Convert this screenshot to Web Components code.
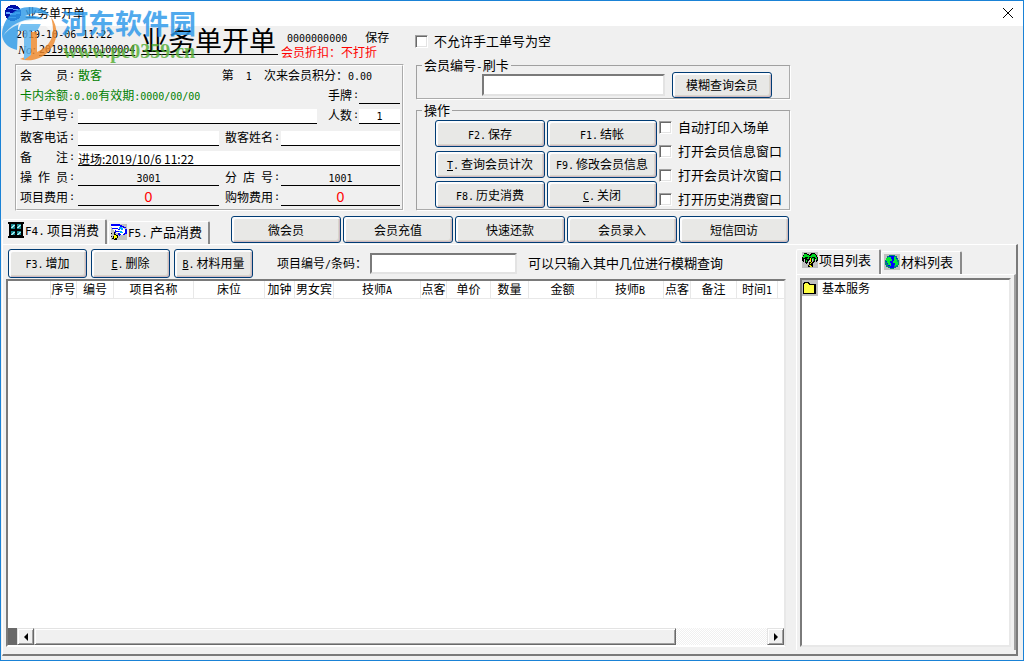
<!DOCTYPE html>
<html lang="zh-CN">
<head>
<meta charset="utf-8">
<title>业务单开单</title>
<style>
html,body{margin:0;height:100%}
body{font:12px/16px "Noto Sans CJK SC",sans-serif;color:#000;background:#f0f0f0}
</style>
</head>
<body>
<order-window></order-window>
<script>
// Half-width runs are set in a 6px monospace beside the 12px full-width glyphs.
const t = s => s.replace(/[ -~]+/g, m => `<span class="a">${m}</span>`);
const base = `
*{box-sizing:border-box}
:host{box-sizing:border-box}
.a,.an{font-family:"DejaVu Sans Mono",monospace;font-size:10px;line-height:1px;white-space:pre}
.big .a{font-size:11px}
button,input{font:inherit;color:inherit;margin:0}
`;
function define(name, css, html) {
  customElements.define(name, class extends HTMLElement {
    constructor() {
      super();
      const tpl = document.createElement('template');
      tpl.innerHTML = `<style>${base}${css}</style>` + (typeof html === 'function' ? html(this) : html);
      this.attachShadow({mode: 'open'}).append(tpl.content.cloneNode(true));
    }
  });
}

define('push-button', `
:host{display:block;height:27px}
button{display:block;width:100%;height:100%;padding:0;border:1px solid #003c74;border-radius:3px;
 background:#e8e8e6;box-shadow:inset 2px 2px #fcfcfd,inset -1px -1px #cdb9c3,inset -2px -2px #d9d5cb;
 line-height:24px;white-space:nowrap;cursor:default}
`, `<button type="button"><slot></slot></button>`);

define('check-box', `
:host{display:block;font-size:13px}
label{display:flex;align-items:center;gap:6px;height:20px;white-space:nowrap}
input{appearance:none;width:13px;height:13px;background:#fff;border:1px solid;border-color:#a0a0a0 #fff #fff #a0a0a0;
 box-shadow:inset 1px 1px #696969,inset -1px -1px #e3e3e3}
`, `<label><input type="checkbox"><slot></slot></label>`);

define('group-box', `
:host{display:block}
fieldset{margin:0;padding:0;height:100%;min-width:0;border:1px solid #a0a0a0;border-right:2px groove #fff;border-bottom:2px groove #fff}
legend{margin-left:5px;padding:0 2px;font-size:13px;line-height:14px}
`, `<fieldset><legend><slot name="title"></slot></legend><slot></slot></fieldset>`);

define('tab-label', `
:host{display:block;height:23px;font-size:13px}
:host([current]){height:25px}
button{display:flex;align-items:center;gap:1px;width:100%;height:100%;padding:0 0 2px 3px;background:#f0f0f0;
 border:0;border-top:1px solid #fff;border-right:2px solid #8a8a8a;box-shadow:inset 1px 0 #fff;
 border-radius:2px 2px 0 0;line-height:18px;white-space:nowrap}
:host([current]) button{padding-left:6px;padding-bottom:4px}
`, `<button type="button"><slot name="icon"></slot><span><slot></slot></span></button>`);

define('pixel-icon', `
:host{display:block;width:16px;height:16px}
svg{display:block}
`, el => `<svg width="16" height="16" viewBox="0 0 16 16" shape-rendering="crispEdges" aria-hidden="true">${({
 window: `<path fill="#000" d="M0 0h16v2h-1v12h1v2H0v-2h1V2H0z"/><path fill="#18878f" d="M3 2h4v5H3zM9 2h4v5H9zM3 9h4v4H3zM9 9h4v4H9z"/><path fill="#9fe8ee" d="M3 5h1V4h1V3h2v1H6v1H5v1H3zM9 5h1V4h1V3h2v1h-1v1h-1v1H9zM3 12h1v-1h1v-1h2v1H6v1H5v1H3zM9 12h1v-1h1v-1h2v1h-1v1h-1v1H9z"/>`,
 hand: `<path fill="#c0c0c0" d="M0 0h16v16H0z"/><path fill="#fff" d="M0 2h9l6 4v4l-6 1-6-4z"/><path fill="#00f" d="M0 0h9v1h2v1h2v1h2v1h-3V3H9V2H0zM1 4h6v1h2v1H5v1h3v1H5v1H4V6h3V5H1zM14 5h2v5h-2v1h-2v-1h1V9h1zM7 9h2v1h1v1H9v1H8v-1H7z"/><path fill="#0af" d="M8 3h3v1h1v2h-2V5H8zM8 7h3v1h1v1H9V8H8z"/><path fill="#000" d="M3 8h1v2h1v1h2v3H6v2H3v-1H2v-3h1zM0 12h1v1H0zM1 14h1v1H1zM0 9h1v1H0z"/><path fill="#ff0" d="M3 11h2v1h1v2H4v1H3z"/>`,
 palm: `<path fill="#c0c0c0" d="M0 0h16v16H0z"/><path fill="#000" d="M2 1h3v1h2v1h1V2h1V1h4v1h1v1h1v2h1v4h-1v1h-1V7h-1v3h-1v1h-1V7h-1v3h1v5H6v-2h1v-3h1V8H7v1H6v2H5v1H4v-1H3V7H2v3H1V9H0V5h1V3h1z"/><path fill="#00d820" d="M2 2h3v1h2v1h2V3h1V2h3v1h1v2h1v3h-1V6h-1V5h-3v1h2v3h-1V7h-1V6H9V5H7v2H5v3H4V8h1V6h1V5H3v1H1V4h1z"/><path fill="#ee0" d="M8 6h1v3H8zM8 9h1v1H8zM9 10h1v1H9zM8 11h1v1H8zM7 13h2v1H7zM8 14h2v1H8z"/>`,
 globe: `<path fill="#c0c0c0" d="M0 0h16v16H0z"/><path fill="#008080" d="M5 1h6v1h2v2h1v2h1v5h-1v2h-2v1h-2v1H6v-1H4v-1H2v-2H1V6h1V4h1V2h2z"/><path fill="#00f" d="M5 2h5v2h3v2h-1v1h-2v2h2v2h-2v3H6v-2H4v-2H3V8H2V6h2V5h2V4H5z"/><path fill="#0e3" d="M2 4h2V3h3v2h1v2H6v2h1v3H6v-1H4V9H3V7H2zM10 3h2v2h1v3h1v3h-2v1h-1V9H9V7h1z"/>`,
 folder: `<path fill="#c0c0c0" d="M0 0h16v16H0z"/><path fill="#000" d="M2 2h5v1h1v1h6v10H1V3h1z"/><path fill="#ff4" d="M3 3h3v1h1v1h5v8H2V4h1z"/>`,
 app: `<path fill="#0010a8" d="M5 0h6v1h2v1h1v1h1v2h1v6h-1v2h-1v1h-2v1h-2v1H5v-1H3v-1H2v-1H1v-2H0V5h1V3h1V2h1V1h2z"/><path fill="#68a8ff" d="M3 3h5v1h5v1H8V4H3zM1 7h4v1h5V7h5v2h-4v1H5V9H1zM4 12h7v1H4z"/>`
})[el.getAttribute('kind')]}</svg>`);

define('site-watermark', `
:host{position:absolute;left:0;top:4px;width:200px;height:60px;pointer-events:none;opacity:.82}
svg{position:absolute;left:0;top:0}
b{position:absolute;left:60px;top:2px;font-size:27px;line-height:32px;color:#2b98ea;white-space:nowrap}
i{position:absolute;left:62px;top:36px;font:bold 20px/20px "Liberation Serif",serif;color:#55ad35;white-space:nowrap}
`, `<svg width="58" height="58" viewBox="0 0 58 58" aria-hidden="true">
<path fill="#2f9be8" d="M1 29C2 14 13 2 29 2c9 0 16 3 20 9-8-4-17-4-25 0 7-1 14 0 19 3L23 16c-5 1-6 4-6 8l-1 21C7 43 1 37 1 29z"/>
<path fill="#f08a2c" d="M50 12c8 10 7 25-2 34-8 9-20 11-29 8l10-4V27h7v20c10-4 16-12 16-22 0-5-1-9-2-13z"/>
<path fill="#5bb5f0" d="M20 19h20l-4 7h-6v24l-7 5V26h-6z"/>
<path fill="#fff" opacity=".7" d="M2 31c7-11 18-17 32-17l14 2c4 3 4 7 1 10-3-5-7-7-13-7H21C13 20 7 25 2 31z"/>
</svg><b>河东软件园</b><i>www.pc0359.cn</i>`);

define('title-bar', `
:host{display:flex;align-items:center;height:25px;padding:0 9px 1px 4px;background:#fff;flex:none}
span{margin-left:4px;flex:1}
button{width:12px;height:24px;padding:0;border:0;background:none}
svg{display:block}
`, `<pixel-icon kind="app"></pixel-icon><span>业务单开单</span>
<button type="button" aria-label="关闭"><svg width="12" height="12" viewBox="0 0 12 12"><path d="M1 1l10 10M11 1L1 11" stroke="#000" fill="none"/></svg></button>`);

define('bill-heading', `
:host{display:flex;height:38px;padding-left:16px;white-space:nowrap}
.no{width:125px;padding-top:1px}
.no div{display:flex;align-items:center;height:15px}
.no .a,.an{line-height:15px}
.no u{text-underline-offset:2px}
em{font-family:"Liberation Serif",serif;font-size:12px;margin:0 3px 0 2px}
h1{margin:1px 0 0;width:137px;height:28px;border-bottom:1px solid #000;font-size:27px;line-height:26px;font-weight:400}
.r{margin-left:3px;padding-top:3px}
.r div{line-height:15px}
.r div:first-child{padding-left:6px}
.r div:first-child span+span{margin-left:18px}
.red{color:#f00}
`, `<div class="no"><div>${t('2019-10-06 11:22')}</div><div><em>No:</em><u class="an">2019100610100004</u></div></div>
<h1>业务单开单</h1>
<div class="r"><div>${t('0000000000')}<span>保存</span></div><div class="red">会员折扣：不打折</div></div>`);

const L = (s, id, cls = '') => `<label class="l ${cls}" for="${id}"><span>${s}</span>${t(':')}</label>`;
const F = (id, cls = '', v = '') => `<input id="${id}" class="${cls}" value="${v}">`;
define('member-panel', `
:host{display:block;margin-left:15px;width:389px;padding:0 2px 3px 3px;border:2px groove #fff;white-space:nowrap}
.row{display:flex;height:20px;align-items:flex-end}
.row:first-of-type{height:18px}
.tall{height:22px}
.l{display:flex;width:58px;flex:none;line-height:18px}
.l>span:first-child{flex:none;width:48px;height:18px;text-align:justify;text-align-last:justify;white-space:normal}
.l .a{padding-left:1px;line-height:18px}
.l.b{width:56px;margin-left:6px}
.l.c{width:31px;margin-left:11px}
.l.c>span:first-child{width:24px}
input{flex:1;min-width:0;height:15px;padding:0;border:0;border-bottom:1px solid #000;background:#fff;border-radius:0;line-height:14px}
.w{flex:none;width:141px}
.s{flex:none;width:41px}
.g{background:none}
.mid{text-align:center;font-family:"DejaVu Sans Mono",monospace;font-size:10px}
.zero{height:17px;color:#f00;font:14px/16px "Liberation Sans",sans-serif;text-align:center}
.green{color:#008000}
.grow{flex:1}
.visits{margin-left:auto;margin-right:28px}
p{margin:0;line-height:18px}
`, `<div class="row"><div class="l"><span>会 员</span>${t(':')}</div><p class="green">散客</p><p class="visits">第${t('  1  ')}次来会员积分：${t('0.00')}</p></div>
<div class="row"><p class="green grow">${t('卡内余额:0.00有效期:0000/00/00')}</p>${L('手牌','tag','c')}${F('tag','s g')}</div>
<div class="row">${L('手工单号','manual')}${F('manual')}${L('人数','people','c')}${F('people','s mid','1')}</div>
<div class="row tall">${L('散客电话','phone')}${F('phone','w')}${L('散客姓名','name','b')}${F('name')}</div>
<div class="row">${L('备 注','note')}${F('note','','进场:2019/10/6 11:22')}</div>
<div class="row">${L('操 作 员','op')}${F('op','w g mid','3001')}${L('分 店 号','shop','b')}${F('shop','g mid','1001')}</div>
<div class="row">${L('项目费用','fee')}${F('fee','w g zero','0')}${L('购物费用','buy','b')}${F('buy','g zero','0')}</div>`);

const B = s => `<push-button>${s}</push-button>`;
define('action-panel', `
:host{display:block;width:375px;margin-left:14px}
.top{display:flex;align-items:center;height:30px;margin:0 0 2px -1px}
.card{height:42px}
.ops{height:108px;margin-top:3px}
.search{display:flex;align-items:center;justify-content:flex-end;gap:7px;padding-right:17px}
.search push-button{width:100px;height:26px}
input{width:183px;height:22px;padding:0 2px;background:#fff;border:2px solid;border-color:#7a7a7a #e3e3e3 #e3e3e3 #7a7a7a}
.body{display:flex;gap:2px;padding-left:18px}
.grid{display:grid;grid-template-columns:110px 110px;gap:3px 2px;padding-top:3px}
.checks{display:grid;gap:4px;align-content:start}
.an{margin-right:2px}
`, `<div class="top"><check-box>不允许手工单号为空</check-box></div>
<group-box class="card"><span slot="title" class="big">${t('会员编号-刷卡')}</span><div class="search"><input aria-label="会员编号">${B('模糊查询会员')}</div></group-box>
<group-box class="ops"><span slot="title">操作</span><div class="body"><div class="grid">
${B('<span class="an">F2.</span>保存')}${B('<span class="an">F1.</span>结帐')}
${B('<span class="an"><u>T</u>.</span>查询会员计次')}${B('<span class="an">F9.</span>修改会员信息')}
${B('<span class="an">F8.</span>历史消费')}${B('<span class="an"><u>C</u>.</span>关闭')}
</div><div class="checks"><check-box>自动打印入场单</check-box><check-box>打开会员信息窗口</check-box><check-box>打开会员计次窗口</check-box><check-box>打开历史消费窗口</check-box></div></div></group-box>`);

const cols = [['',43],['序号',26],['编号',37],['项目名称',80],['床位',71],['加钟',30],['男女宾',39],['技师A',87],['点客',26],['单价',44],['数量',38],['金额',68],['技师B',67],['点客',27],['备注',46],['时间1',41],['',0]];
define('item-grid', `
:host{display:flex;flex-direction:column;flex:1;min-height:0;background:#fff;border:2px solid;border-color:#7a7a7a #e8e8e8 #fff #7a7a7a}
.view{flex:1;overflow:hidden}
table{width:100%;table-layout:fixed;border-collapse:separate;border-spacing:0}
th{height:18px;padding:0;font-weight:400;line-height:15px;vertical-align:top;white-space:nowrap;overflow:hidden;border-right:1px solid #e8e8e8;border-bottom:1px solid #e8e8e8}
th:last-child{border-right:0}
.bar{display:flex;height:17px;background:repeating-conic-gradient(#f0f0f0 0 25%,#fff 0 50%) 0 0/2px 2px}
.corner{width:9px;background:#696969}
.arrow,.thumb{background:#f0f0f0;border:1px solid;border-color:#e3e3e3 #696969 #696969 #e3e3e3;box-shadow:inset 1px 1px #fff,inset -1px -1px #a0a0a0}
.arrow{width:17px;padding:0;display:grid;place-items:center}
.thumb{flex:643}
.rest{flex:91}
`, `<div class="view"><table><colgroup>${cols.map(c => c[1] ? `<col style="width:${c[1]}px">` : '<col>').join('')}</colgroup><thead><tr>${cols.map(c => `<th>${t(c[0])}</th>`).join('')}</tr></thead></table></div>
<div class="bar"><div class="corner"></div><button class="arrow" type="button" aria-label="左"><svg width="4" height="8"><path d="M4 0v8L0 4z"/></svg></button><div class="thumb"></div><div class="rest"></div><button class="arrow" type="button" aria-label="右"><svg width="4" height="8"><path d="M0 0v8l4-4z"/></svg></button></div>`);

define('catalog-panel', `
:host{display:flex;flex-direction:column;width:220px;flex:none;padding-top:4px}
.tabs{display:flex;align-items:flex-end}
.t1{width:85px}.t2{width:81px}
.page{flex:1;display:flex;border:1px solid #fff;border-right:2px solid #a0a0a0;border-bottom:0;padding:3px;margin-bottom:4px}
ul{flex:1;margin:0;padding:0;list-style:none;background:#fff;border:2px solid;border-color:#7a7a7a #e8e8e8 #e8e8e8 #7a7a7a}
li{display:flex;align-items:center;gap:4px;line-height:16px}
`, `<div class="tabs"><tab-label current class="t1"><pixel-icon slot="icon" kind="palm"></pixel-icon>项目列表</tab-label><tab-label class="t2"><pixel-icon slot="icon" kind="globe"></pixel-icon>材料列表</tab-label></div>
<div class="page"><ul><li><pixel-icon kind="folder"></pixel-icon>基本服务</li></ul></div>`);

define('order-window', `
:host{display:flex;flex-direction:column;position:relative;min-width:1024px;min-height:100vh;border:1px solid #1a82d6;background:#f0f0f0}
.top{display:flex;flex:none}
.left{flex:none;width:402px;margin-left:-1px}
.nav{display:flex;align-items:flex-end;height:33px;flex:none;padding-left:1px}
.n1{width:105px}.n2{width:102px;margin-left:1px}
.nav .a{margin-right:2px}
.links{display:grid;grid-template-columns:repeat(5,110px);gap:2px;align-self:flex-start;margin:5px 0 0 21px}
.main{flex:1;display:flex;margin:0 5px 4px 1px;border:1px solid #fff;border-right:2px solid #7a7a7a;border-bottom:2px solid #7a7a7a;gap:10px}
.work{flex:1;min-width:0;display:flex;flex-direction:column;padding:3px 0 7px 3px}
.tools{display:flex;align-items:center;height:30px;margin:0 0 1px 2px;flex:none;white-space:nowrap}
.tools push-button{width:79px;height:29px;margin-right:4px}
.tools label{margin:0 3px 0 20px}
.tools input{width:147px;height:21px;background:#fff;border:2px solid;border-color:#7a7a7a #e3e3e3 #e3e3e3 #7a7a7a}
.hint{margin-left:11px;font-size:13px}
.an{margin-right:2px}
`, `<title-bar></title-bar>
<div class="top"><div class="left"><bill-heading></bill-heading><member-panel></member-panel></div><action-panel></action-panel></div>
<div class="nav big"><tab-label current class="n1"><pixel-icon slot="icon" kind="window"></pixel-icon>${t('F4.项目消费')}</tab-label><tab-label class="n2"><pixel-icon slot="icon" kind="hand"></pixel-icon>${t('F5.产品消费')}</tab-label>
<div class="links">${['微会员','会员充值','快速还款','会员录入','短信回访'].map(B).join('')}</div></div>
<div class="main"><div class="work"><div class="tools">${B('<span class="an">F3.</span>增加')}${B('<span class="an"><u>E</u>.</span>删除')}${B('<span class="an"><u>B</u>.</span>材料用量')}
<label for="code">${t('项目编号/条码：')}</label><input id="code"><span class="hint">可以只输入其中几位进行模糊查询</span></div>
<item-grid></item-grid></div><catalog-panel></catalog-panel></div>
<site-watermark></site-watermark>`);
</script>
</body>
</html>
